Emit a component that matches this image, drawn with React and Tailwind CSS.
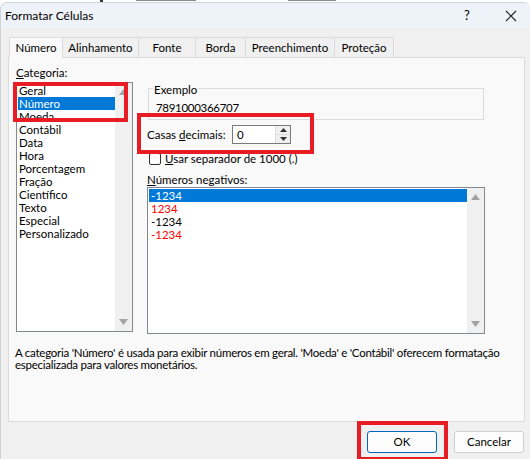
import React from 'react';

const font = { fontFamily: 'Lato, "Liberation Sans", sans-serif' };

const categories = [
  'Geral', 'Número', 'Moeda', 'Contábil', 'Data', 'Hora', 'Porcentagem',
  'Fração', 'Científico', 'Texto', 'Especial', 'Personalizado',
];

const tabs = [
  { label: 'Número', w: 'w-[54px]' },
  { label: 'Alinhamento', w: 'w-[76px]' },
  { label: 'Fonte', w: 'w-[57px]' },
  { label: 'Borda', w: 'w-[50px]' },
  { label: 'Preenchimento', w: 'w-[89px]' },
  { label: 'Proteção', w: 'w-[59px]' },
];

// ── Scrollbar with arrows ────────────────────────────────────────────────────
const ScrollBar = () => (
  <div className="w-[17px] h-full bg-[#f0f0f0] flex flex-col items-center justify-between py-[6px]">
    <svg width="9" height="6" viewBox="0 0 9 6"><path d="M0 6 L4.5 0 L9 6 Z" fill="#a3a3a3" /></svg>
    <svg width="9" height="6" viewBox="0 0 9 6"><path d="M0 0 L9 0 L4.5 6 Z" fill="#a3a3a3" /></svg>
  </div>
);

const RedBox = ({ className }) => (
  <div className={`absolute border-[4px] border-[#e81c24] pointer-events-none ${className}`} />
);

export default function App() {
  return (
    <div className="relative w-[530px] h-[459px] bg-white overflow-hidden text-[11.5px] text-black" style={font}>
      {/* background fragments above the dialog */}
      <div className="h-[2px] relative">
        <div className="absolute left-[100px] top-0 w-[3px] h-[2px] bg-[#333]" />
        <div className="absolute left-[136px] top-0 w-[60px] h-[1px] bg-[#888]" />
        <div className="absolute left-[288px] top-0 w-[48px] h-[1px] bg-[#888]" />
      </div>

      <div className="flex flex-col h-[457px] rounded-t-[7px] border-t border-l border-[#cfd3da] bg-[#f0f0f0] overflow-hidden">
        {/* title bar */}
        <div className="h-[25px] bg-[#eef2f9] flex items-center pl-[4px] shrink-0 text-[12px]">
          <span className="flex-1">Formatar Células</span>
          <span className="w-[41px] text-[13px]">?</span>
          <svg width="12" height="12" viewBox="0 0 12 12" className="mr-[13px]">
            <path d="M1 1 L11 11 M11 1 L1 11" stroke="#222" strokeWidth="1.1" />
          </svg>
        </div>

        {/* tabs */}
        <div className="flex pl-[8px] mt-[9px] h-[20px] relative z-10">
          {tabs.map((t, i) => (
            <div
              key={t.label}
              className={
                i === 0
                  ? `${t.w} h-[21px] flex items-center justify-center bg-[#f9f9f9] border border-b-0 border-[#dcdcdc]`
                  : `${t.w} h-[20px] flex items-center justify-center bg-[#f0f0f0] border border-l-0 border-b-0 border-[#dcdcdc]`
              }
            >
              {t.label}
            </div>
          ))}
        </div>

        {/* panel */}
        <div className="ml-[7px] mr-[5px] h-[365px] border border-[#dcdcdc] bg-[#f9f9f9] flex flex-col">
          <div className="flex">
            {/* categoria */}
            <div className="pl-[7px] pt-[7px] w-[130px]">
              <div className="leading-[15px]"><span className="underline">C</span>ategoria:</div>
              <div className="mt-[2px] w-[117px] h-[250px] border border-[#828790] bg-white flex">
                <div className="flex-1 pt-[1px] pl-px">
                  {categories.map((c, i) => (
                    <div
                      key={c}
                      className={`h-[13px] leading-[13px] pl-[1px] ${i === 1 ? 'bg-[#0078d7] text-white' : ''}`}
                    >
                      {c}
                    </div>
                  ))}
                </div>
                <ScrollBar />
              </div>
            </div>

            {/* right side */}
            <div className="pl-[8px] pt-[30px] flex-1">
              <div className="relative ml-[1px] w-[336px] h-[32px] border border-[#dcdcdc]">
                <span className="absolute left-[4px] top-[-6px] px-px bg-[#f9f9f9] leading-[13px]">Exemplo</span>
                <div className="pl-[7px] pt-[11px] leading-[15px] tracking-[-0.3px]">7891000366707</div>
              </div>

              <div className="flex items-center mt-[5px] h-[19px]">
                <span className="w-[85px] whitespace-nowrap">Casas <span className="underline">d</span>ecimais:</span>
                <div className="w-[59px] h-[19px] border border-[#7a7a7a] bg-white flex">
                  <span className="flex-1 pl-[4px] leading-[17px]">0</span>
                  <div className="w-[15px] flex flex-col border-l border-[#dcdcdc] bg-[#f0f0f0]">
                    <div className="flex-1 flex items-center justify-center border-b border-[#dcdcdc]">
                      <svg width="7" height="4" viewBox="0 0 7 4"><path d="M0 4 L3.5 0 L7 4 Z" fill="#333" /></svg>
                    </div>
                    <div className="flex-1 flex items-center justify-center">
                      <svg width="7" height="4" viewBox="0 0 7 4"><path d="M0 0 L7 0 L3.5 4 Z" fill="#333" /></svg>
                    </div>
                  </div>
                </div>
              </div>

              <div className="flex items-center mt-[8px] ml-[2px] h-[13px]">
                <div className="w-[12px] h-[12px] border border-[#333] rounded-[2px] bg-white" />
                <span className="ml-[4px]"><span className="underline">U</span>sar separador de 1000 (.)</span>
              </div>

              <div className="mt-[7px] leading-[15px]"><span className="underline">N</span>úmeros negativos:</div>
              <div className="mt-0 w-[338px] h-[147px] border border-[#828790] bg-white flex">
                <div className="flex-1 pt-[1px] pl-px">
                  <div className="h-[13px] leading-[13px] bg-[#0078d7] text-white pl-[2px]">-1234</div>
                  <div className="h-[13px] leading-[13px] text-[#ff0000] pl-[2px]">1234</div>
                  <div className="h-[13px] leading-[13px] pl-[2px]">-1234</div>
                  <div className="h-[13px] leading-[13px] text-[#ff0000] pl-[2px]">-1234</div>
                </div>
                <ScrollBar />
              </div>
            </div>
          </div>

          <div className="pl-[6px] pt-[13px] leading-[12px] whitespace-nowrap tracking-[-0.25px]">
            A categoria 'Número' é usada para exibir números em geral. 'Moeda' e 'Contábil' oferecem formatação
            <br />
            especializada para valores monetários.
          </div>
        </div>

        {/* buttons */}
        <div className="flex justify-end gap-[17px] pr-[6px] mt-[9px]">
          <button className="w-[70px] h-[22px] rounded-[3px] border border-[#0067c0] bg-[#fdfdfd]">OK</button>
          <button className="w-[70px] h-[22px] rounded-[3px] border border-[#d0d0d0] bg-[#fdfdfd]">Cancelar</button>
        </div>
      </div>

      {/* annotation boxes */}
      <RedBox className="left-[13px] top-[82px] w-[115px] h-[40px]" />
      <RedBox className="left-[137px] top-[113px] w-[177px] h-[41px]" />
      <RedBox className="left-[357px] top-[421px] w-[91px] h-[40px]" />
    </div>
  );
}
